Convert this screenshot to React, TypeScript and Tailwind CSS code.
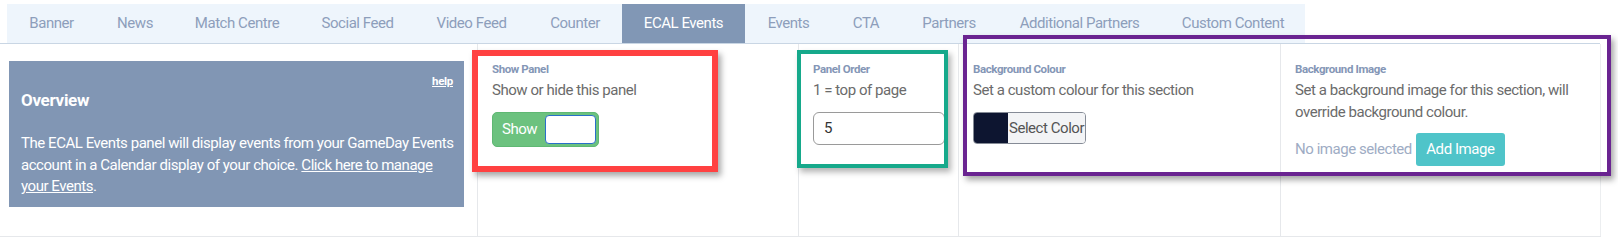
import React from 'react'

const tabs = [
  { label: 'Banner', width: 'w-[89px]' },
  { label: 'News', width: 'w-[78px]' },
  { label: 'Match Centre', width: 'w-[126px]' },
  { label: 'Social Feed', width: 'w-[115px]' },
  { label: 'Video Feed', width: 'w-[113px]' },
  { label: 'Counter', width: 'w-[94px]' },
  { label: 'ECAL Events', width: 'w-[123px]', active: true },
  { label: 'Events', width: 'w-[87px]' },
  { label: 'CTA', width: 'w-[68px]' },
  { label: 'Partners', width: 'w-[98px]' },
  { label: 'Additional Partners', width: 'w-[163px]' },
  { label: 'Custom Content', width: 'w-[144px]' }
]

function FieldHead({ label, children }: { label: string; children: React.ReactNode }) {
  return (
    <>
      <div className="text-[11.5px] leading-[16px] font-bold tracking-[-0.4px] text-[#8496b6]">{label}</div>
      <div className="mt-[2px] whitespace-nowrap text-[15px] leading-[22px] tracking-[-0.45px] text-[#6b6b6b]">
        {children}
      </div>
    </>
  )
}

export default function App() {
  return (
    <div className="relative h-[240px] w-[1618px] overflow-hidden bg-white font-['Roboto',sans-serif]">
      {/* tab strip */}
      <div className="w-[1600px] border-b border-[#c9d6e4] pl-[7px] pt-[4px]">
        <div className="flex h-[39px] w-[1298px] bg-[#eef5fc]">
          {tabs.map((t) => (
            <div
              key={t.label}
              className={`${t.width} flex items-center justify-center whitespace-nowrap text-[15px] tracking-[-0.45px] ${
                t.active ? 'bg-[#8197b5] text-white' : 'text-[#8d9ebb]'
              }`}
            >
              {t.label}
            </div>
          ))}
        </div>
      </div>

      {/* settings row */}
      <div className="flex h-[193px] w-[1601px] border-b border-[#e6e8eb]">
        <div className="w-[478px] border-r border-[#e6e8eb] pl-[9px] pt-[17px]">
          <div className="relative h-[146px] w-[455px] bg-[#8196b4] px-[12px] pt-[27px] text-white">
            <a className="absolute right-[11px] top-[12px] text-[11.5px] font-bold tracking-[-0.3px] underline">help</a>
            <div className="text-[17px] leading-[24px] font-bold tracking-[-0.3px]">Overview</div>
            <p className="mt-[21px] whitespace-nowrap text-[15px] leading-[21.5px] tracking-[-0.45px]">
              The ECAL Events panel will display events from your GameDay Events
              <br />
              account in a Calendar display of your choice. <span className="underline">Click here to manage</span>
              <br />
              <span className="underline">your Events</span>.
            </p>
          </div>
        </div>

        <div className="w-[321px] border-r border-[#e6e8eb] pl-[14px] pt-[17px]">
          <FieldHead label="Show Panel">Show or hide this panel</FieldHead>
          <div className="mt-[11px] flex h-[35px] w-[107px] items-center justify-between rounded-[5px] border border-[#5fb873] bg-[#6cc27f] pl-[9px] pr-[2px]">
            <span className="text-[15px] tracking-[-0.45px] text-white">Show</span>
            <span className="h-[29px] w-[51px] rounded-[4px] border-[1.5px] border-[#2a6fc9] bg-white" />
          </div>
        </div>

        <div className="w-[160px] border-r border-[#e6e8eb] pl-[14px] pr-[14px] pt-[17px]">
          <FieldHead label="Panel Order">1 = top of page</FieldHead>
          <div className="mt-[11px] flex h-[33px] w-[132px] items-center rounded-[6px] border border-[#9a9a9a] pl-[10px] text-[15px] text-[#333]">
            5
          </div>
        </div>

        <div className="w-[322px] border-r border-[#e6e8eb] pl-[14px] pt-[17px]">
          <FieldHead label="Background Colour">Set a custom colour for this section</FieldHead>
          <div className="mt-[11px] flex h-[32px] w-[113px] overflow-hidden rounded-[4px] border border-[#858b96]">
            <span className="w-[34px] bg-[#0d1530]" />
            <span className="flex flex-1 items-center justify-center whitespace-nowrap bg-[#f3f4f6] text-[15px] tracking-[-0.45px] text-[#555]">
              Select Color
            </span>
          </div>
        </div>

        <div className="w-[320px] border-r border-[#eceef0] pl-[14px] pr-[14px] pt-[17px]">
          <FieldHead label="Background Image">
            Set a background image for this section, will
            <br />
            override background colour.
          </FieldHead>
          <div className="mt-[10px] flex items-center gap-[4px]">
            <span className="whitespace-nowrap text-[15px] tracking-[-0.45px] text-[#9eacc4]">No image selected</span>
            <span className="flex h-[33px] w-[89px] items-center justify-center whitespace-nowrap rounded-[3px] bg-[#4fc4c9] text-[15px] tracking-[-0.45px] text-white">
              Add Image
            </span>
          </div>
        </div>
      </div>

      {/* annotation boxes */}
      <div className="absolute left-[472px] top-[50px] h-[122px] w-[246px] border-[6px] border-[#ff4141] shadow-[3px_4px_6px_rgba(0,0,0,0.35)]" />
      <div className="absolute left-[797px] top-[50px] h-[118px] w-[151px] border-[4px] border-[#16a98b] shadow-[3px_4px_6px_rgba(0,0,0,0.3)]" />
      <div className="absolute left-[963px] top-[35px] h-[141px] w-[648px] border-[4px] border-[#6a2491] shadow-[3px_4px_6px_rgba(0,0,0,0.35)]" />
    </div>
  )
}
